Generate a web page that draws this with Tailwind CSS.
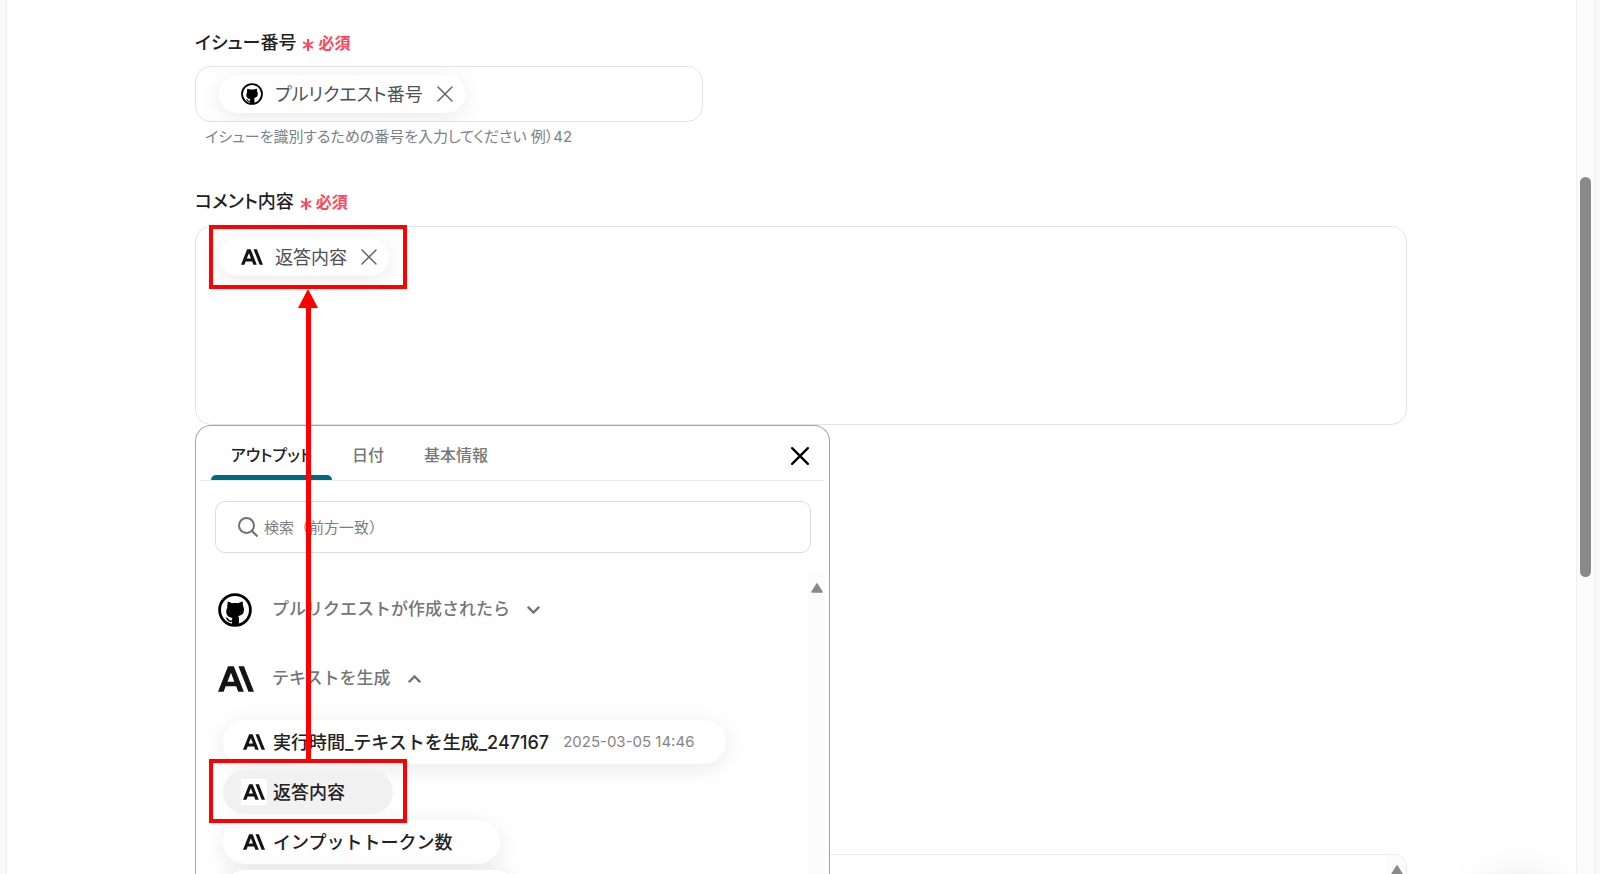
<!DOCTYPE html>
<html lang="ja">
<head>
  <meta charset="UTF-8">
  <meta name="viewport" content="width=device-width, initial-scale=1.0">
  <title>コメント設定</title>
  <script src="https://cdn.jsdelivr.net/npm/@tailwindcss/browser@4"></script>
</head>
<body class="flex h-screen overflow-hidden bg-[#f9f9f9] font-['Inter','Noto_Sans_CJK_JP',sans-serif] text-[#222]">

  <!-- shared icons -->
  <svg class="hidden">
    <symbol id="ai" viewBox="0 3 24 18">
      <path fill="#141414" d="M17.3 3.54h-3.67l6.7 16.92H24ZM6.7 3.54 0 20.46h3.74l1.37-3.55h7.01l1.37 3.55h3.74L10.54 3.54Zm-.37 10.22 2.29-5.94 2.29 5.94Z"/>
    </symbol>
    <symbol id="github" viewBox="0 0 34 34">
      <circle cx="17" cy="17" r="15.4" fill="#fff" stroke="#000" stroke-width="2.8"/>
      <path d="M9.600 8.800c1.700 0 3.200.7 4.300 1.400 2-.4 4.400-.4 6.400 0 1.100-.7 2.600-1.400 4.300-1.400.5 1.400.5 2.700.2 3.800.8 1.200 1.200 2.500 1.200 4 0 4.200-2.300 6-5.800 6.500.5.6.7 1.400.7 2.400V32h-7v-3.200c-3 .6-4.200-.8-5-2.200-.4-.8-.9-1.400-1.600-1.900 1.700-.4 2.700.6 3.500 1.800.8 1 1.800 1.200 3 .8.100-1.200.400-1.800.8-2.300-3.500-.5-6.400-2.300-6.400-6.500 0-1.500.4-2.800 1.200-4-.3-1.100-.3-2.300.2-3.700Z"/>
    </symbol>
    <symbol id="x" viewBox="0 0 16 16">
      <path d="M1 1l14 14M15 1L1 15" fill="none" stroke="currentColor" stroke-linecap="round"/>
    </symbol>
  </svg>

  <main class="relative ml-[7px] flex-1 bg-white shadow-[0_0_2px_rgba(0,0,0,0.15)]">
    <form class="flex flex-col pt-[31px] pr-[169px] pl-[188px]">

      <div class="flex flex-col">
        <div class="flex items-center gap-1.5 leading-6">
          <label for="issue" class="text-[18px] font-medium [font-feature-settings:'palt']">イシュー番号</label>
          <span class="flex items-center gap-1 text-[16px] font-bold text-[#ff4758]">
            <svg class="mt-1 size-3" viewBox="0 0 12 12" fill="none" stroke="currentColor" stroke-width="2"><path d="M6 0v12M1 3l10 6M11 3L1 9"/></svg>
            必須
          </span>
        </div>
        <div class="mt-[11px] flex h-14 w-[508px] items-center overflow-hidden rounded-2xl border border-[#dfe3e8] px-[23px]">
          <span class="flex h-[38px] shrink-0 items-center rounded-full bg-white pr-3 pl-[22px] text-[18px] text-[#4b5157] shadow-[0_4px_24px_rgba(0,0,0,0.09)]">
            <svg class="size-[22px]"><use href="#github"/></svg>
            <span class="ml-3 [font-feature-settings:'palt']">プルリクエスト番号</span>
            <button type="button" aria-label="削除" class="ml-3.5"><svg class="size-4 text-[#666]" stroke-width="1.5"><use href="#x"/></svg></button>
          </span>
          <input id="issue" type="text" class="min-w-0 flex-1 pl-2 outline-none">
        </div>
        <p class="mt-[5px] pl-2.5 text-[15px] leading-5 text-[#7a8187] [font-feature-settings:'palt']">イシューを識別するための番号を入力してください 例）42</p>
      </div>

      <div class="relative mt-[43px] flex flex-col">
        <div class="flex items-center gap-1.5 leading-6">
          <label for="comment" class="text-[18px] font-medium [font-feature-settings:'palt']">コメント内容</label>
          <span class="flex items-center gap-1 text-[16px] font-bold text-[#ff4758]">
            <svg class="mt-1 size-3" viewBox="0 0 12 12" fill="none" stroke="currentColor" stroke-width="2"><path d="M6 0v12M1 3l10 6M11 3L1 9"/></svg>
            必須
          </span>
        </div>
        <div class="mt-3 flex h-[199px] items-start rounded-2xl border border-[#dfe3e8] px-[23px] py-[11px]">
          <span class="flex h-[38px] shrink-0 items-center rounded-full bg-white pr-3 pl-[22px] text-[18px] text-[#4b5157] shadow-[0_4px_24px_rgba(0,0,0,0.09)]">
            <svg class="h-[18px] w-[22px]"><use href="#ai"/></svg>
            <span class="ml-3 [font-feature-settings:'palt']">返答内容</span>
            <button type="button" aria-label="削除" class="ml-3.5"><svg class="size-4 text-[#666]" stroke-width="1.5"><use href="#x"/></svg></button>
          </span>
          <textarea id="comment" class="h-full flex-1 resize-none pl-2 outline-none"></textarea>
        </div>

        <!-- output picker -->
        <div class="absolute top-full left-0 z-10 w-[635px] rounded-t-2xl border border-b-0 border-[#a4a6a6] bg-white px-1 pb-8">
          <div class="flex h-[55px] items-stretch border-b border-[#ececec] pr-4 pl-[11px] text-[16px] font-medium text-[#777] [font-feature-settings:'palt']">
            <button type="button" class="relative w-[121px] pt-1 text-[#222]">アウトプット<span class="absolute inset-x-0 bottom-0 h-[5px] rounded-t-md bg-[#006b80]"></span></button>
            <button type="button" class="w-[72px] pt-1">日付</button>
            <button type="button" class="w-[104px] pt-1">基本情報</button>
            <button type="button" aria-label="閉じる" class="ml-auto pt-1.5"><svg class="size-[18px] text-black" stroke-width="2"><use href="#x"/></svg></button>
          </div>
          <div class="mr-3.5 mb-5 ml-[15px] mt-5 flex h-[52px] items-center gap-1.5 rounded-[10px] border border-[#dcdcdc] pl-[22px]">
            <svg class="size-5 shrink-0" viewBox="0 0 20 20" fill="none" stroke="#707070" stroke-width="2"><circle cx="8.500" cy="8.500" r="7.500"/><path d="M14 14l5.500 5.500"/></svg>
            <input type="search" aria-label="検索" placeholder="検索（前方一致）" class="min-w-0 flex-1 pt-0.5 text-[15px] outline-none placeholder:text-[#7c7c7c]">
          </div>
          <div class="flex">
            <div class="flex min-w-0 flex-1 flex-col items-start pl-[18px]">
              <button type="button" class="mt-3 flex h-[50px] items-center text-[17px] font-medium text-[#757575]">
                <svg class="size-[34px]"><use href="#github"/></svg>
                <span class="ml-5">プルリクエストが作成されたら</span>
                <svg class="ml-[17px] h-2 w-[13px]" viewBox="0 0 13 8" fill="none" stroke="currentColor" stroke-width="2.400"><path d="M.8.8l5.700 5.700L12.200.8"/></svg>
              </button>
              <button type="button" class="mt-[19px] flex h-[50px] items-center text-[17px] font-medium text-[#757575]">
                <svg class="h-7 w-9"><use href="#ai"/></svg>
                <span class="ml-[18px]">テキストを生成</span>
                <svg class="ml-[17px] h-2 w-[13px]" viewBox="0 0 13 8" fill="none" stroke="currentColor" stroke-width="2.400"><path d="M.8 7.200l5.700-5.700 5.700 5.700"/></svg>
              </button>
              <div class="mt-4 flex flex-col items-start gap-1.5 pl-[5px] text-[18px] font-medium">
                <button type="button" class="flex h-11 items-center rounded-full bg-white pr-8 pl-5 shadow-[0_4px_24px_rgba(0,0,0,0.09)]">
                  <svg class="h-[18px] w-[22px]"><use href="#ai"/></svg>
                  <span class="ml-2">実行時間_テキストを生成_247167</span>
                  <span class="ml-3.5 text-[15px] font-normal text-[#858585]">2025-03-05 14:46</span>
                </button>
                <button type="button" class="z-10 flex h-11 items-center rounded-full bg-[#f1f1f1] pr-12 pl-[18px]">
                  <span class="flex h-[26px] w-[26px] items-center justify-center bg-white"><svg class="h-[18px] w-[22px]"><use href="#ai"/></svg></span>
                  <span class="ml-1.5">返答内容</span>
                </button>
                <button type="button" class="flex h-11 items-center rounded-full bg-white pr-12 pl-5 shadow-[0_4px_24px_rgba(0,0,0,0.09)]">
                  <svg class="h-[18px] w-[22px]"><use href="#ai"/></svg>
                  <span class="ml-2">インプットトークン数</span>
                </button>
                <button type="button" aria-label="アウトプットトークン数" class="flex h-11 w-[294px] items-center rounded-full bg-white pl-5 shadow-[0_4px_24px_rgba(0,0,0,0.09)]">
                  <svg class="h-[18px] w-[22px]"><use href="#ai"/></svg>
                </button>
              </div>
            </div>
            <div class="w-[17px] bg-[#fbfbfb] pt-2.5">
              <svg class="mx-auto h-2.5 w-3" viewBox="0 0 12 10"><path d="M6 1L11 9H1Z" fill="#8a8a8a" stroke="#8a8a8a" stroke-linejoin="round" stroke-width="1.500"/></svg>
            </div>
          </div>
        </div>

        <!-- drag guide -->
        <div class="pointer-events-none absolute top-[35px] left-3.5 z-20 flex w-[198px] flex-col items-center">
          <div class="h-16 w-full border-4 border-[#fe0000]"></div>
          <svg class="h-[19px] w-5" viewBox="0 0 20 19"><path d="M10 0L20 19H0Z" fill="#fe0000"/></svg>
          <div class="h-[451px] w-[5px] bg-[#fe0000]"></div>
          <div class="h-16 w-full border-4 border-[#fe0000]"></div>
        </div>
      </div>

      <div class="mt-[429px] flex h-40 justify-end rounded-xl border border-[#ececec]">
        <div class="w-[19px] rounded-tr-xl bg-[#fbfbfb] pt-2.5">
          <svg class="mx-auto h-2.5 w-3" viewBox="0 0 12 10"><path d="M6 1L11 9H1Z" fill="#8a8a8a" stroke="#8a8a8a" stroke-linejoin="round" stroke-width="1.500"/></svg>
        </div>
      </div>
    </form>
    <div class="absolute right-6 -bottom-20 size-16 rounded-full bg-white shadow-[0_0_50px_rgba(0,0,0,0.25)]"></div>
  </main>

  <!-- page scrollbar -->
  <div class="mr-[5px] w-[19px] border-r border-[#f0f0f0] bg-[#fcfcfc] pt-[177px]">
    <div class="mx-auto h-[400px] w-[11px] rounded-full bg-[#8a8a8a]"></div>
  </div>
</body>
</html>
